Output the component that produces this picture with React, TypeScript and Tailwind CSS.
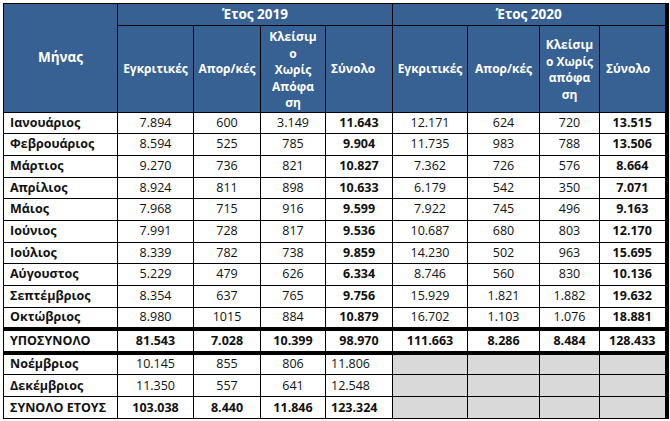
const months: string[][] = [
  ["Ιανουάριος", "7.894", "600", "3.149", "11.643", "12.171", "624", "720", "13.515"],
  ["Φεβρουάριος", "8.594", "525", "785", "9.904", "11.735", "983", "788", "13.506"],
  ["Μάρτιος", "9.270", "736", "821", "10.827", "7.362", "726", "576", "8.664"],
  ["Απρίλιος", "8.924", "811", "898", "10.633", "6.179", "542", "350", "7.071"],
  ["Μάιος", "7.968", "715", "916", "9.599", "7.922", "745", "496", "9.163"],
  ["Ιούνιος", "7.991", "728", "817", "9.536", "10.687", "680", "803", "12.170"],
  ["Ιούλιος", "8.339", "782", "738", "9.859", "14.230", "502", "963", "15.695"],
  ["Αύγουστος", "5.229", "479", "626", "6.334", "8.746", "560", "830", "10.136"],
  ["Σεπτέμβριος", "8.354", "637", "765", "9.756", "15.929", "1.821", "1.882", "19.632"],
  ["Οκτώβριος", "8.980", "1015", "884", "10.879", "16.702", "1.103", "1.076", "18.881"],
];

const subtotal = ["ΥΠΟΣΥΝΟΛΟ", "81.543", "7.028", "10.399", "98.970", "111.663", "8.286", "8.484", "128.433"];

const tail = [
  { name: "Νοέμβριος", vals: ["10.145", "855", "806", "11.806"], bold: false },
  { name: "Δεκέμβριος", vals: ["11.350", "557", "641", "12.548"], bold: false },
  { name: "ΣΥΝΟΛΟ ΕΤΟΥΣ", vals: ["103.038", "8.440", "11.846", "123.324"], bold: true },
];

const widths = [114, 76, 67, 65, 67, 75, 72, 60, 67];

const th = "border border-black bg-[#376192] text-white font-bold text-center align-middle";
const td = "border border-black text-center align-middle p-0";

export default function App() {
  return (
    <div className="bg-white w-[670px] h-[421px] pt-[3px] pl-[3px] text-[#111] font-['Open_Sans',sans-serif]">
      <table className="border-collapse table-fixed text-[12.5px] leading-none">
        <colgroup>
          {widths.map((w, i) => (
            <col key={i} style={{ width: w }} />
          ))}
        </colgroup>
        <thead>
          <tr className="h-[22px]">
            <th rowSpan={2} className={`${th} text-[13.5px]`}>Μήνας</th>
            <th colSpan={4} className={`${th} text-[13.5px]`}>Έτος 2019</th>
            <th colSpan={4} className={`${th} text-[13.5px] border-r-4 border-r-double`}>Έτος 2020</th>
          </tr>
          <tr className="h-[85px] text-[12px] leading-[16.5px]">
            <th className={th}>Εγκριτικές</th>
            <th className={th}>Απορ/κές</th>
            <th className={`${th} pt-[3px]`}>Κλείσιμ<br />ο<br />Χωρίς<br />Απόφα<br />ση</th>
            <th className={`${th} text-left pl-[5px]`}>Σύνολο</th>
            <th className={th}>Εγκριτικές</th>
            <th className={th}>Απορ/κές</th>
            <th className={`${th} pt-[3px]`}>Κλείσιμ<br />ο Χωρίς<br />απόφα<br />ση</th>
            <th className={`${th} text-left pl-[6px] border-r-4 border-r-double`}>Σύνολο</th>
          </tr>
        </thead>
        <tbody>
          {months.map((r, ri) => {
            const last = ri === months.length - 1;
            const edge = last ? "border-b-4 border-b-double" : "";
            return (
              <tr key={r[0]} className="h-[21.7px]">
                <td className={`${td} ${edge} text-left pl-[6px] font-bold`}>{r[0]}</td>
                {r.slice(1).map((v, i) => (
                  <td
                    key={i}
                    className={`${td} ${edge} ${i === 3 || i === 7 ? "font-bold" : ""} ${i === 7 ? "border-r-4 border-r-double" : ""}`}
                  >
                    {v}
                  </td>
                ))}
              </tr>
            );
          })}
          <tr className="h-[24px] font-bold">
            <td className={`${td} border-b-4 border-b-double text-left pl-[6px]`}>{subtotal[0]}</td>
            {subtotal.slice(1).map((v, i) => (
              <td key={i} className={`${td} border-b-4 border-b-double ${i === 7 ? "border-r-4 border-r-double" : ""}`}>
                {v}
              </td>
            ))}
          </tr>
          {tail.map((t) => (
            <tr key={t.name} className={`h-[22px] ${t.bold ? "font-bold" : ""}`}>
              <td className={`${td} text-left pl-[6px] font-bold`}>{t.name}</td>
              <td className={td}>{t.vals[0]}</td>
              <td className={td}>{t.vals[1]}</td>
              <td className={td}>{t.vals[2]}</td>
              <td className={`${td} text-left pl-[5px]`}>{t.vals[3]}</td>
              <td className={`${td} bg-[#d9d9d9]`} />
              <td className={`${td} bg-[#d9d9d9]`} />
              <td className={`${td} bg-[#d9d9d9]`} />
              <td className={`${td} bg-[#d9d9d9] border-r-4 border-r-double`} />
            </tr>
          ))}
        </tbody>
      </table>
    </div>
  );
}
